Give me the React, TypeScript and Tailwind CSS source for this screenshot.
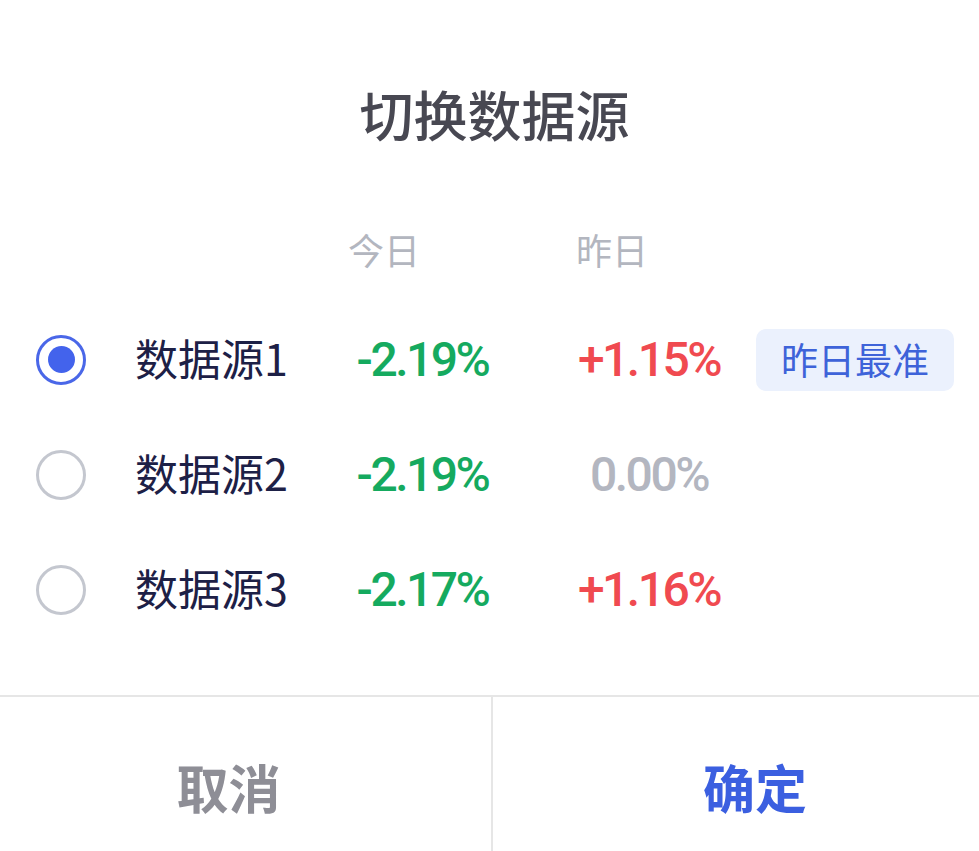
import React from "react";

const CJK = '"Noto Sans CJK SC", "Noto Sans", sans-serif';
const NUM = 'Roboto, "Noto Sans", sans-serif';

type Row = { name: string; today: string; yest: string; yColor: string; selected?: boolean; badge?: boolean };

const rows: Row[] = [
  { name: "数据源1", today: "-2.19%", yest: "+1.15%", yColor: "text-[#f04a50]", selected: true, badge: true },
  { name: "数据源2", today: "-2.19%", yest: "0.00%", yColor: "text-[#b3b6c0]" },
  { name: "数据源3", today: "-2.17%", yest: "+1.16%", yColor: "text-[#f04a50]" },
];

function Radio({ selected }: { selected?: boolean }) {
  return selected ? (
    <div className="flex h-[50px] w-[50px] shrink-0 items-center justify-center rounded-full border-[3px] border-[#4a67e8]">
      <div className="h-[27px] w-[27px] rounded-full bg-[#4363ec]" />
    </div>
  ) : (
    <div className="h-[50px] w-[50px] shrink-0 rounded-full border-[3px] border-[#c4c7cf]" />
  );
}

export default function App() {
  return (
    <div className="h-[851px] w-[979px] overflow-hidden bg-white" style={{ fontFamily: CJK }}>
      <div className="mt-[87px] pl-[10px] text-center text-[54px] font-medium leading-[54px] text-[#484852]">切换数据源</div>

      <div className="mt-[90px] flex pl-[348px] text-[36px] leading-[36px] text-[#b3b6bf]">
        <div className="w-[228px]">今日</div>
        <div>昨日</div>
      </div>

      <div className="mt-[35px] flex flex-col">
        {rows.map((r) => (
          <div key={r.name} className="flex h-[115px] items-center pl-[36px]">
            <Radio selected={r.selected} />
            <div className="mb-[5px] ml-[49px] w-[205px] text-[43px] leading-[43px] text-[#1d2046]">{r.name}</div>
            <div
              className="w-[165px] text-center text-[48px] font-medium leading-[48px] tracking-[-2.5px] text-[#15aa5f]"
              style={{ fontFamily: NUM }}
            >
              {r.today}
            </div>
            <div
              className={`ml-[61px] w-[166px] text-center text-[48px] font-medium leading-[48px] tracking-[-2.5px] ${r.yColor}`}
              style={{ fontFamily: NUM }}
            >
              {r.yest}
            </div>
            {r.badge && (
              <div className="ml-[24px] flex h-[62px] w-[198px] items-center justify-center rounded-[10px] bg-[#ebf1fd] text-[37px] leading-[37px] text-[#3e63d9]">
                昨日最准
              </div>
            )}
          </div>
        ))}
      </div>

      <div className="mt-[48px] flex h-[200px] border-t-2 border-[#e6e6e6]">
        <div className="flex h-[196px] w-[493px] items-start justify-center border-r-2 border-[#e6e6e6] pr-[34px] pt-[64px]">
          <span className="text-[52px] font-bold leading-[52px] text-[#8e8e96]">取消</span>
        </div>
        <div className="flex flex-1 items-start justify-center pl-[38px] pt-[64px]">
          <span className="text-[52px] font-bold leading-[52px] text-[#3b5fe0]">确定</span>
        </div>
      </div>
    </div>
  );
}
